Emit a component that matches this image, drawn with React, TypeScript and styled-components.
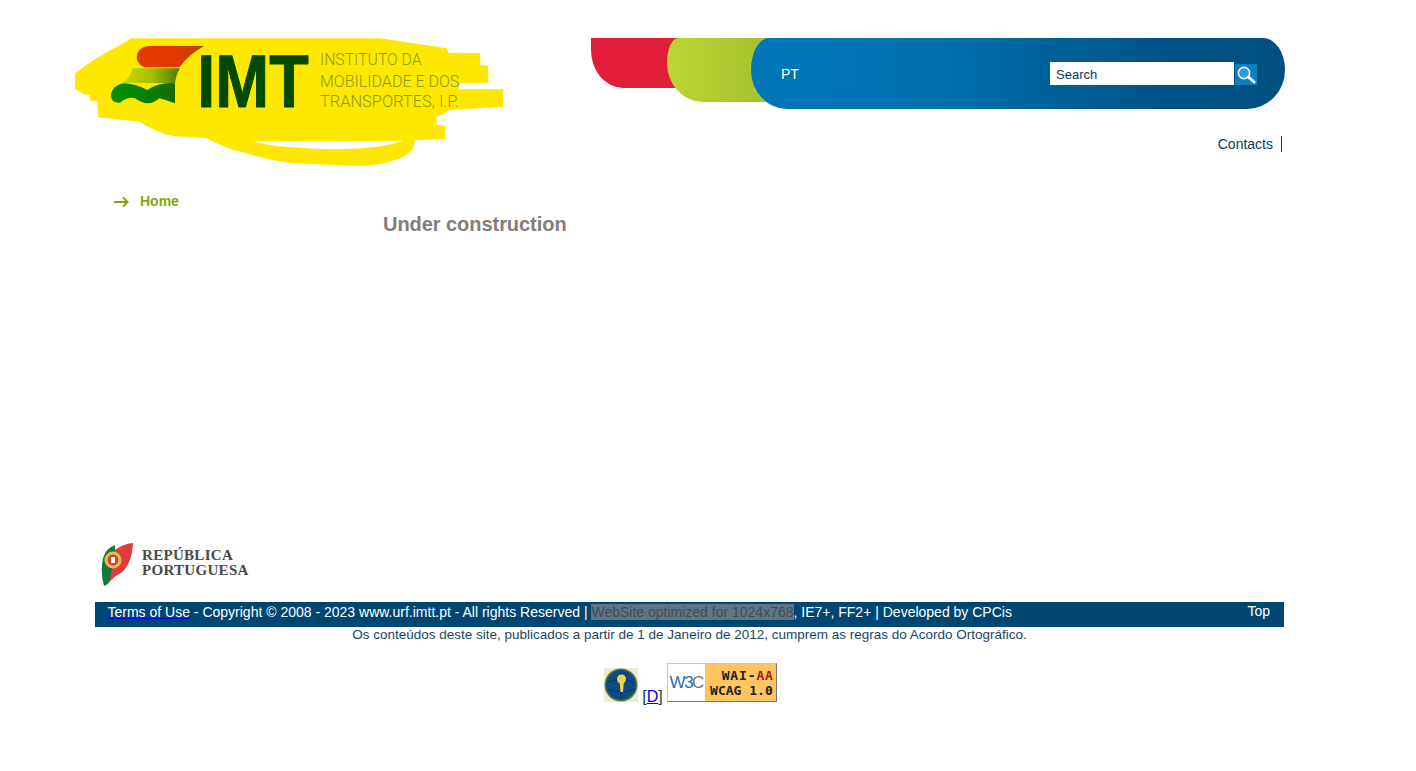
import React from 'react'
import styled, { createGlobalStyle } from 'styled-components'

const GlobalStyle = createGlobalStyle`
    html, body {
        margin: 0;
        padding: 0;
        background: #ffffff;
        font-family: 'Liberation Sans', Arial, sans-serif;
        font-size: 14px;
        color: #0b3a5c;
    }
`

const Page = styled.div`
    width: 1416px;
    height: 771px;
    overflow: hidden;
    padding: 38px 0 0 75px;
    box-sizing: border-box;
`

const Header = styled.header`
    display: flex;
    height: 130px;
`

const LogoBox = styled.div`
    width: 516px;
    flex: none;
`

const HeaderRight = styled.div`
    width: 694px;
    display: flex;
    flex-direction: column;
`

const Pills = styled.div`
    display: flex;
    align-items: flex-start;
`

const RedPill = styled.div`
    width: 112px;
    height: 50px;
    margin-right: -36px;
    flex: none;
    background: #e11d38;
    border-radius: 0 0 0 32px / 0 0 0 38px;
`

const GreenPill = styled.div`
    width: 126px;
    height: 64px;
    margin-right: -42px;
    flex: none;
    background: linear-gradient(90deg, #bcd631 0%, #9fbb2e 100%);
    border-radius: 11px 0 0 36px / 25px 0 0 39px;
`

const BluePill = styled.div`
    width: 534px;
    height: 71px;
    flex: none;
    display: flex;
    align-items: center;
    justify-content: space-between;
    padding: 0 28px 0 30px;
    box-sizing: border-box;
    color: #ffffff;
    background: linear-gradient(90deg, #0077b8 0%, #0070ae 35%, #005286 78%, #004f80 100%);
    border-radius: 18px 22px 38px 36px / 32px 32px 39px 39px;
`

const LangLink = styled.span`
    font-size: 14px;
    line-height: 16px;
    margin-top: 1px;
`

const SearchForm = styled.form`
    display: flex;
    align-items: center;
`

const SearchInput = styled.input`
    width: 184px;
    height: 23px;
    box-sizing: border-box;
    border: 0;
    outline: 0;
    padding: 1px 6px 0;
    font-family: 'Liberation Sans', Arial, sans-serif;
    font-size: 13px;
    color: #0b3a5c;
    background: #ffffff;
`

const SearchButton = styled.button`
    width: 22px;
    height: 21px;
    margin: 2px 0 0 1px;
    padding: 0;
    border: 0;
    display: flex;
    align-items: center;
    justify-content: center;
    background: #0a80bd;
`

const TopLinks = styled.div`
    display: flex;
    justify-content: flex-end;
    padding: 27px 3px 0 0;
`

const ContactLink = styled.span`
    font-size: 14px;
    line-height: 16px;
    padding-right: 8px;
    border-right: 1px solid #0b3a5c;
`

const Main = styled.main`
    height: 374px;
    display: flex;
    box-sizing: border-box;
`

const SideMenu = styled.nav`
    width: 308px;
    flex: none;
    padding: 25px 0 0 39px;
    box-sizing: border-box;
`

const MenuItem = styled.div`
    display: flex;
    align-items: center;
    gap: 11px;
    font-size: 14px;
    font-weight: 700;
    line-height: 16px;
    color: #7fa90c;
`

const Content = styled.section`
    padding-top: 45px;
`

const Title = styled.h1`
    margin: 0;
    font-size: 20px;
    line-height: 23px;
    font-weight: 700;
    letter-spacing: -0.05px;
    color: #857b7b;
`

const Footer = styled.footer`
    width: 1189px;
    margin-left: 20px;
`

const Republic = styled.div`
    display: flex;
    align-items: center;
    height: 45px;
    padding-left: 6px;
    gap: 9px;
`

const RepublicName = styled.div`
    font-family: 'Liberation Serif', serif;
    font-weight: 700;
    font-size: 15px;
    line-height: 15px;
    color: #4a4a4a;
    letter-spacing: 0.3px;
    margin-top: -4px;
`

const CopyBar = styled.div`
    margin-top: 15px;
    height: 25px;
    display: flex;
    justify-content: space-between;
    padding: 0 14px 0 12.5px;
    box-sizing: border-box;
    background: #004672;
    color: #ffffff;
    font-size: 14px;
    line-height: 20px;
`

const TopLink = styled.span`
    margin-top: -1px;
`

const TermsLink = styled.a`
    color: #ffffff;
    text-decoration: underline;
    text-decoration-color: #0000ee;
`

const Highlight = styled.span`
    background: #5f7686;
    color: #3f4b54;
`

const Notice = styled.p`
    margin: 0;
    text-align: center;
    font-size: 13.5px;
    line-height: 15px;
    color: #1c4560;
`

const Badges = styled.div`
    display: flex;
    justify-content: center;
    align-items: flex-end;
    gap: 4px;
    margin-top: 21px;
    padding-left: 2px;
`

const GlobeBox = styled.div`
    margin-bottom: 1px;
`

const AccessWrap = styled.span`
    font-size: 16px;
    line-height: 18px;
    margin-bottom: -3px;
    color: #0b3a5c;
`

const AccessLink = styled.a`
    color: #0000ee;
    text-decoration: underline;
`

const WaiBadge = styled.div`
    width: 110px;
    height: 39px;
    margin-bottom: 1px;
    display: flex;
    box-sizing: border-box;
    border: 1px solid #777777;
    border-top-color: #c8c8c8;
    border-left-color: #c8c8c8;
    background: #ffffff;
`

const W3cMark = styled.div`
    width: 37px;
    flex: none;
    display: flex;
    align-items: center;
    justify-content: center;
    font-family: 'Liberation Sans', Arial, sans-serif;
    font-size: 17px;
    letter-spacing: -1.5px;
    color: #2a6ea8;
`

const W3cC = styled.span`
    color: #777777;
`

const WaiText = styled.div`
    flex: 1;
    display: flex;
    flex-direction: column;
    align-items: flex-end;
    justify-content: center;
    padding-right: 3px;
    background: #fdc45f;
    font-family: 'DejaVu Sans Mono', 'Liberation Mono', monospace;
    font-weight: 700;
    font-size: 13px;
    line-height: 15px;
    color: #222222;
`

const WaiLine = styled.span`
    letter-spacing: 0.85px;
    margin-right: -1px;
`

const AA = styled.span`
    color: #a81c12;
`

const ImtLogo = () => (
    <svg width="430" height="130" viewBox="0 0 430 130" style={{ display: 'block' }}>
        <defs>
            <linearGradient id="red" x1="0" x2="1">
                <stop offset="0" stopColor="#e83a00" />
                <stop offset="0.6" stopColor="#e03800" />
                <stop offset="1" stopColor="#b04a00" />
            </linearGradient>
            <linearGradient id="lime" x1="0" x2="1">
                <stop offset="0" stopColor="#c6dc00" />
                <stop offset="0.5" stopColor="#a8c000" />
                <stop offset="1" stopColor="#4d7c00" />
            </linearGradient>
            <linearGradient id="wave" x1="0" x2="1">
                <stop offset="0" stopColor="#0a9000" />
                <stop offset="0.6" stopColor="#058000" />
                <stop offset="1" stopColor="#1a6a00" />
            </linearGradient>
        </defs>
        <g transform="translate(-15 -8) scale(0.3333)">
            <path
                fill="#ffe800"
                fillRule="evenodd"
                d="M215 25 L960 25 L1160 55 L1165 68 L1260 70 L1262 105 L1285 108 L1285 158 L1200 160 L1195 178 L1330 178 L1330 230 L1170 240 L1130 262 L1130 285 L1155 287 L1155 328 L1065 330 L1060 355 Q1040 378 1020 385 Q960 408 900 408 L700 400 Q620 390 560 370 Q510 360 470 340 L440 325 L340 318 Q280 305 240 275 L115 262 L112 212 L90 212 L88 195 L70 192 L45 178 L45 130 L100 90 Z M580 334 Q640 350 700 352 Q800 362 900 355 Q980 350 1030 332 Q800 335 580 334 Z"
            />
            <path
                fill="url(#red)"
                d="M262 48 L432 48 Q385 75 358 112 L252 112 Q230 100 230 80 Q232 55 262 48 Z"
            />
            <path
                fill="url(#lime)"
                d="M218 115 L360 115 Q348 135 345 160 L186 158 Q210 145 218 115 Z"
            />
            <path
                fill="url(#wave)"
                d="M190 160 Q225 160 262 180 Q300 155 345 160 L345 220 Q318 210 298 205 Q265 235 225 205 Q205 198 180 218 Q152 220 153 192 Q160 165 190 160 Z"
            />
            <text
                x="412"
                y="232"
                fontFamily="'Liberation Sans', sans-serif"
                fontWeight="700"
                fontSize="224"
                textLength="334"
                lengthAdjust="spacingAndGlyphs"
                fill="#004a00"
                stroke="#004a00"
                strokeWidth="3"
                strokeLinejoin="round"
            >
                IMT
            </text>
            <g fontFamily="Roboto, sans-serif" fontWeight="300" fontSize="48" fill="#869a00">
                <text x="780" y="106" textLength="305" lengthAdjust="spacingAndGlyphs">
                    INSTITUTO DA
                </text>
                <text x="780" y="170" textLength="418" lengthAdjust="spacingAndGlyphs">
                    MOBILIDADE E DOS
                </text>
                <text x="780" y="232" textLength="416" lengthAdjust="spacingAndGlyphs">
                    TRANSPORTES, I.P.
                </text>
            </g>
        </g>
    </svg>
)

const MenuArrow = () => (
    <svg width="15" height="11" viewBox="0 0 15 11" fill="none" stroke="#7fa90c" strokeWidth="2">
        <path d="M0 6 H13 M9 1.5 L13.5 6 L9 10.5" />
    </svg>
)

const SearchGlyph = () => (
    <svg width="20" height="19" viewBox="0 0 20 19" fill="none">
        <circle cx="8" cy="8" r="5.6" stroke="#e6f6fc" strokeWidth="1.6" fill="#2f9ccf" />
        <path d="M12.5 12 L18 17" stroke="#ffffff" strokeWidth="3" strokeLinecap="round" />
    </svg>
)

const RepublicEmblem = () => (
    <svg width="32" height="45" viewBox="0 0 32 45">
        <path d="M14 3 Q5 6 2 16 Q-1 30 3 44 Q8 42 12 38 L14 20 Z" fill="#0f7a3c" />
        <path d="M32 1 Q31 22 20 31 Q12 36 8 41 L12 22 L14 8 Q22 2 32 1 Z" fill="#e03a3e" />
        <path d="M22 31 Q14 34 6 44" stroke="#ffffff" strokeWidth="1.5" fill="none" />
        <circle cx="12" cy="18" r="8.5" fill="#e8c040" />
        <circle cx="12" cy="18" r="5.5" fill="#c5483e" />
        <rect x="10" y="15" width="4" height="6" fill="#f2f2f2" />
    </svg>
)

const GlobeIcon = () => (
    <svg width="34" height="34" viewBox="0 0 34 34" style={{ display: 'block' }}>
        <rect width="34" height="34" fill="#e8ece0" />
        <circle cx="17" cy="17" r="16.5" fill="#5f7f20" />
        <circle cx="17" cy="17" r="15" fill="#0d4a86" />
        <path d="M4 14 Q17 9 30 14 M3 21 Q17 26 31 21 M17 2 V32" stroke="#0a3560" fill="none" />
        <circle cx="17.5" cy="11" r="4.5" fill="#f2d24a" />
        <path d="M15.5 12 H20 L19 24 H16.5 Z" fill="#f2d24a" />
    </svg>
)

export default function App() {
    return (
        <Page>
            <GlobalStyle />
            <Header>
                <LogoBox>
                    <ImtLogo />
                </LogoBox>
                <HeaderRight>
                    <Pills>
                        <RedPill />
                        <GreenPill />
                        <BluePill>
                            <LangLink>PT</LangLink>
                            <SearchForm>
                                <SearchInput defaultValue="Search" />
                                <SearchButton type="button">
                                    <SearchGlyph />
                                </SearchButton>
                            </SearchForm>
                        </BluePill>
                    </Pills>
                    <TopLinks>
                        <ContactLink>Contacts</ContactLink>
                    </TopLinks>
                </HeaderRight>
            </Header>
            <Main>
                <SideMenu>
                    <MenuItem>
                        <MenuArrow />
                        Home
                    </MenuItem>
                </SideMenu>
                <Content>
                    <Title>Under construction</Title>
                </Content>
            </Main>
            <Footer>
                <Republic>
                    <RepublicEmblem />
                    <RepublicName>
                        REPÚBLICA
                        <br />
                        PORTUGUESA
                    </RepublicName>
                </Republic>
                <CopyBar>
                    <span>
                        <TermsLink>Terms of Use</TermsLink> - Copyright © 2008 - 2023 www.urf.imtt.pt - All rights
                        Reserved | <Highlight>WebSite optimized for 1024x768</Highlight>, IE7+, FF2+ | Developed by
                        CPCis
                    </span>
                    <TopLink>Top</TopLink>
                </CopyBar>
                <Notice>
                    Os conteúdos deste site, publicados a partir de 1 de Janeiro de 2012, cumprem as regras do Acordo
                    Ortográfico.
                </Notice>
                <Badges>
                    <GlobeBox>
                        <GlobeIcon />
                    </GlobeBox>
                    <AccessWrap>
                        [<AccessLink>D</AccessLink>]
                    </AccessWrap>
                    <WaiBadge>
                        <W3cMark>
                            W3<W3cC>C</W3cC>
                        </W3cMark>
                        <WaiText>
                            <WaiLine>
                                WAI-<AA>AA</AA>
                            </WaiLine>
                            <span>WCAG 1.0</span>
                        </WaiText>
                    </WaiBadge>
                </Badges>
            </Footer>
        </Page>
    )
}
